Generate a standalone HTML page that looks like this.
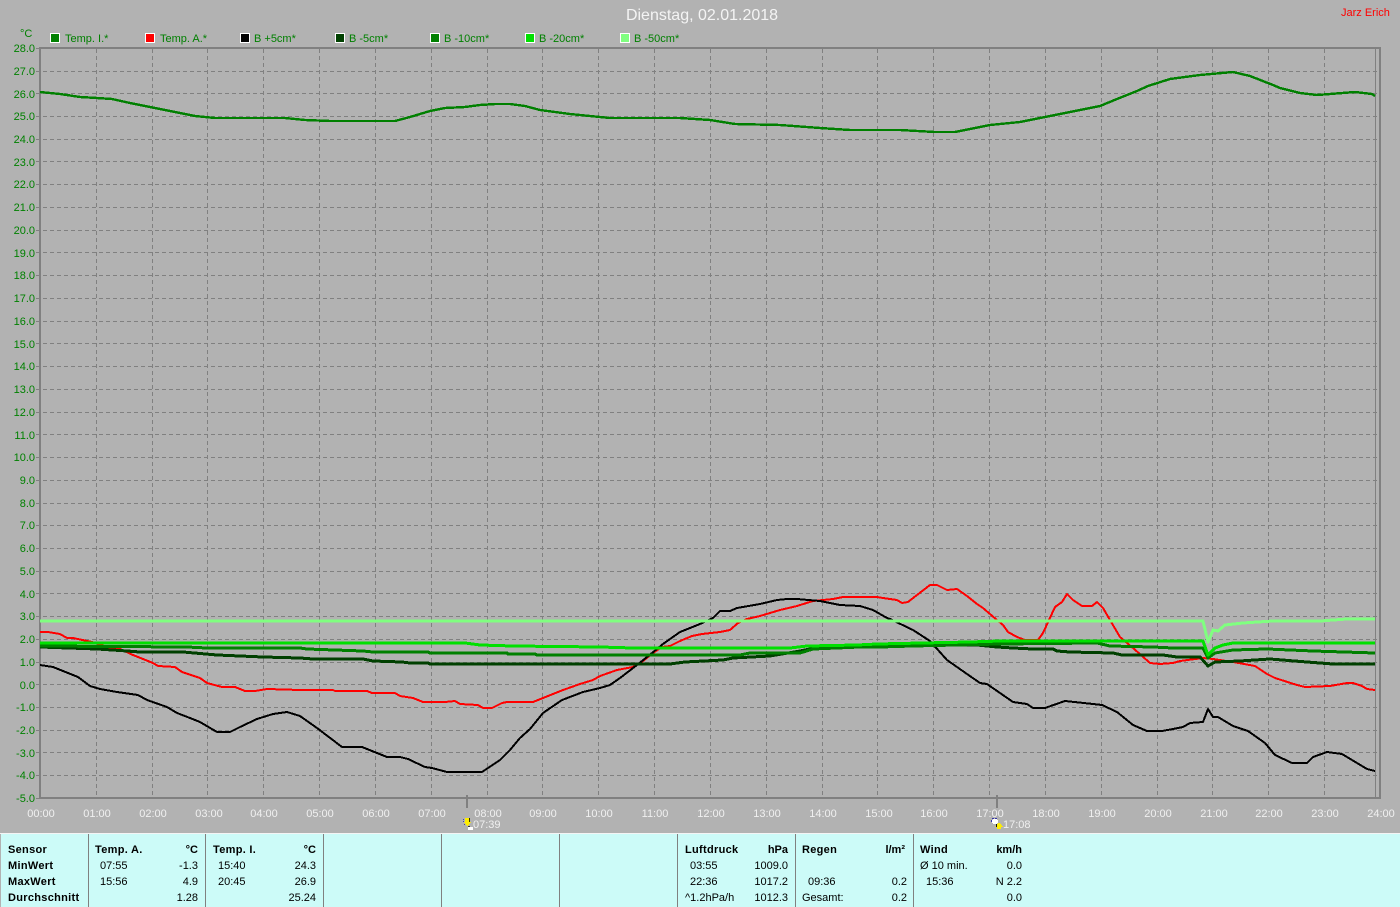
<!DOCTYPE html>
<html><head><meta charset="utf-8"><title>Dienstag, 02.01.2018</title>
<style>
html,body{margin:0;padding:0;width:1400px;height:907px;overflow:hidden;background:#b2b2b2}
svg{display:block}
text{font-family:"Liberation Sans",sans-serif;font-size:11px}
.y{fill:#008000;text-anchor:end}
.l{fill:#008000}
.x{fill:#f0f0f0;text-anchor:middle}
.b{font-weight:bold;letter-spacing:.3px;fill:#000}
.t{fill:#000}
.r{fill:#000;text-anchor:end}
.rb{fill:#000;text-anchor:end;font-weight:bold}
polyline{fill:none;stroke-linejoin:round;shape-rendering:crispEdges}
</style></head><body>
<svg width="1400" height="907" viewBox="0 0 1400 907" xmlns="http://www.w3.org/2000/svg">
<rect width="1400" height="907" fill="#b2b2b2"/>
<text x="702" y="20" text-anchor="middle" style="font-size:16px" fill="#f4f4f4">Dienstag, 02.01.2018</text>
<text x="1341" y="16" fill="#ff0000">Jarz Erich</text>
<text x="20" y="37" class="l">°C</text>

<g shape-rendering="crispEdges" stroke="#fff" stroke-width="1">
<rect x="50.5" y="33.5" width="9" height="9" fill="#008000"/>
<rect x="145.5" y="33.5" width="9" height="9" fill="#ff0000"/>
<rect x="240.5" y="33.5" width="9" height="9" fill="#000"/>
<rect x="335.5" y="33.5" width="9" height="9" fill="#004000"/>
<rect x="430.5" y="33.5" width="9" height="9" fill="#008000"/>
<rect x="525.5" y="33.5" width="9" height="9" fill="#00e000"/>
<rect x="620.5" y="33.5" width="9" height="9" fill="#80ff80"/>
</g>
<text x="65" y="42" class="l">Temp. I.*</text>
<text x="160" y="42" class="l">Temp. A.*</text>
<text x="254" y="42" class="l">B +5cm*</text>
<text x="349" y="42" class="l">B -5cm*</text>
<text x="444" y="42" class="l">B -10cm*</text>
<text x="539" y="42" class="l">B -20cm*</text>
<text x="634" y="42" class="l">B -50cm*</text>

<path shape-rendering="crispEdges" fill="none" stroke="#808080" stroke-width="1" stroke-dasharray="4 3" d="M96.5 49V798M152.5 49V798M207.5 49V798M263.5 49V798M319.5 49V798M375.5 49V798M431.5 49V798M487.5 49V798M542.5 49V798M598.5 49V798M654.5 49V798M710.5 49V798M766.5 49V798M822.5 49V798M877.5 49V798M933.5 49V798M989.5 49V798M1045.5 49V798M1101.5 49V798M1157.5 49V798M1212.5 49V798M1268.5 49V798M1324.5 49V798
M36 71.5H1380M36 93.5H1380M36 116.5H1380M36 139.5H1380M36 161.5H1380M36 184.5H1380M36 207.5H1380M36 230.5H1380M36 252.5H1380M36 275.5H1380M36 298.5H1380M36 321.5H1380M36 343.5H1380M36 366.5H1380M36 389.5H1380M36 412.5H1380M36 434.5H1380M36 457.5H1380M36 480.5H1380M36 503.5H1380M36 525.5H1380M36 548.5H1380M36 571.5H1380M36 593.5H1380M36 616.5H1380M36 639.5H1380M36 662.5H1380M36 684.5H1380M36 707.5H1380M36 730.5H1380M36 752.5H1380M36 775.5H1380"/>
<g shape-rendering="crispEdges" fill="#808080">
<rect x="39" y="47" width="2" height="752"/>
<rect x="39" y="47" width="1342" height="2"/>
<rect x="39" y="797" width="1342" height="2"/>
<rect x="1379" y="47" width="2" height="752"/>
<rect x="1375" y="49" width="1" height="748"/>
<rect x="36" y="48" width="3" height="1"/>
<rect x="36" y="798" width="3" height="1"/>
<rect x="466" y="795" width="2" height="13"/>
<rect x="996" y="795" width="2" height="13"/>
</g>

<g class="ylabels">
<text x="35" y="52" class="y">28.0</text><text x="35" y="75" class="y">27.0</text><text x="35" y="98" class="y">26.0</text><text x="35" y="120" class="y">25.0</text><text x="35" y="143" class="y">24.0</text><text x="35" y="166" class="y">23.0</text><text x="35" y="188" class="y">22.0</text><text x="35" y="211" class="y">21.0</text><text x="35" y="234" class="y">20.0</text><text x="35" y="257" class="y">19.0</text><text x="35" y="279" class="y">18.0</text><text x="35" y="302" class="y">17.0</text><text x="35" y="325" class="y">16.0</text><text x="35" y="348" class="y">15.0</text><text x="35" y="370" class="y">14.0</text><text x="35" y="393" class="y">13.0</text><text x="35" y="416" class="y">12.0</text><text x="35" y="439" class="y">11.0</text><text x="35" y="461" class="y">10.0</text><text x="35" y="484" class="y">9.0</text><text x="35" y="507" class="y">8.0</text><text x="35" y="529" class="y">7.0</text><text x="35" y="552" class="y">6.0</text><text x="35" y="575" class="y">5.0</text><text x="35" y="598" class="y">4.0</text><text x="35" y="620" class="y">3.0</text><text x="35" y="643" class="y">2.0</text><text x="35" y="666" class="y">1.0</text><text x="35" y="689" class="y">0.0</text><text x="35" y="711" class="y">-1.0</text><text x="35" y="734" class="y">-2.0</text><text x="35" y="757" class="y">-3.0</text><text x="35" y="779" class="y">-4.0</text><text x="35" y="802" class="y">-5.0</text>
</g>

<!-- Temp I -->
<polyline stroke="#008000" stroke-width="2.4" points="40,92 60,94 80,97 97,98 112,99 130,103 150,107 175,112 195,116 215,118 250,118 285,118 305,120 330,121 395,121 410,117 430,111 445,108 465,107 480,105 495,104 510,104 525,106 540,110 570,114 610,118 680,118 710,120 735,124 780,125 820,128 850,130 900,130 935,132 955,132 970,129 990,125 1020,122 1045,117 1070,112 1100,106 1117,99 1137,91 1148,86 1170,79 1200,75 1233,72 1250,76 1273,85 1280,88 1300,93 1317,95 1330,94 1355,92 1372,94 1375,96"/>
<!-- Temp A -->
<polyline stroke="#ff0000" stroke-width="2" points="40,632 48,632 60,634 67,638 73,638 92,642 110,648 120,649 133,655 153,663 158,666 175,667 182,672 200,678 207,683 222,687 235,687 245,691 255,691 267,689 300,690 333,690 335,691 367,691 372,693 395,693 400,696 413,698 423,702 445,702 455,701 460,704 478,705 483,708 492,708 502,703 507,702 533,702 548,696 563,690 580,684 593,680 600,676 617,670 633,667 643,661 653,653 662,647 670,646 680,641 692,636 702,634 720,632 730,630 738,623 747,619 760,616 770,613 780,610 797,606 813,601 833,599 843,597 877,597 883,598 897,600 902,603 908,602 917,595 930,585 937,585 947,590 957,589 967,596 977,604 983,608 997,620 1003,625 1008,632 1017,637 1025,640 1038,640 1043,633 1055,607 1062,602 1067,594 1073,600 1082,606 1092,606 1097,602 1103,608 1110,620 1120,637 1133,648 1150,663 1160,664 1173,663 1180,661 1203,658 1213,659 1233,662 1255,666 1267,674 1275,678 1297,685 1305,687 1330,686 1347,683 1353,683 1362,686 1367,689 1375,690"/>
<!-- B +5 -->
<polyline stroke="#000" stroke-width="2" points="40,665 53,667 63,671 78,677 90,686 100,689 117,692 138,695 147,700 167,707 177,713 190,718 200,722 217,732 230,732 240,727 257,719 273,714 287,712 300,716 317,728 342,747 362,747 377,753 387,757 400,757 408,759 425,767 432,768 447,772 482,772 500,760 510,750 520,738 530,729 543,713 562,700 583,692 600,688 610,685 620,678 637,665 652,653 663,644 680,632 700,624 713,618 720,611 730,611 737,608 760,604 777,600 787,599 797,599 820,601 840,605 860,606 873,610 887,618 890,619 913,630 930,641 947,660 967,674 980,683 987,684 1013,702 1027,704 1033,708 1045,708 1065,701 1093,704 1102,705 1117,712 1133,725 1147,731 1162,731 1173,729 1183,727 1190,723 1203,722 1208,709 1213,717 1218,717 1233,726 1248,731 1265,743 1270,749 1275,755 1292,763 1307,763 1313,757 1327,752 1342,754 1367,769 1375,771"/>
<!-- B -5 -->
<polyline stroke="#004000" stroke-width="3" points="40,647 97,649 127,651 140,652 183,652 217,655 263,657 300,658 313,659 363,659 373,661 402,662 410,663 428,663 430,664 670,664 685,662 723,660 733,658 770,656 800,651 810,649 827,648 880,646 913,645 977,645 997,647 1013,648 1033,649 1053,649 1057,651 1070,652 1113,653 1122,655 1163,655 1177,657 1200,657 1208,666 1215,662 1240,661 1270,659 1307,662 1333,664 1375,664"/>
<!-- B -10 -->
<polyline stroke="#008000" stroke-width="3" points="40,646 187,647 207,648 300,648 307,649 363,651 373,652 428,652 430,653 507,653 508,654 535,654 537,655 740,655 750,653 800,653 813,649 860,647 880,647 913,646 1000,644 1097,643 1110,646 1153,647 1173,648 1203,648 1208,658 1215,653 1233,650 1267,649 1313,651 1375,653"/>
<!-- B -20 -->
<polyline stroke="#00e000" stroke-width="3" points="40,643 465,643 480,645 513,646 600,647 633,648 790,648 807,646 857,645 877,644 922,643 970,642 1000,641 1203,641 1208,655 1215,648 1223,645 1233,643 1375,643"/>
<!-- B -50 -->
<polyline stroke="#80ff80" stroke-width="3" points="40,621 1203,621 1208,642 1213,630 1218,631 1225,625 1243,623 1273,621 1320,621 1347,619 1375,619"/>

<g>
<text x="41" y="817" class="x">00:00</text><text x="97" y="817" class="x">01:00</text><text x="153" y="817" class="x">02:00</text><text x="209" y="817" class="x">03:00</text><text x="264" y="817" class="x">04:00</text><text x="320" y="817" class="x">05:00</text><text x="376" y="817" class="x">06:00</text><text x="432" y="817" class="x">07:00</text><text x="488" y="817" class="x">08:00</text><text x="543" y="817" class="x">09:00</text><text x="599" y="817" class="x">10:00</text><text x="655" y="817" class="x">11:00</text><text x="711" y="817" class="x">12:00</text><text x="767" y="817" class="x">13:00</text><text x="823" y="817" class="x">14:00</text><text x="879" y="817" class="x">15:00</text><text x="934" y="817" class="x">16:00</text><text x="990" y="817" class="x">17:00</text><text x="1046" y="817" class="x">18:00</text><text x="1102" y="817" class="x">19:00</text><text x="1158" y="817" class="x">20:00</text><text x="1214" y="817" class="x">21:00</text><text x="1269" y="817" class="x">22:00</text><text x="1325" y="817" class="x">23:00</text><text x="1381" y="817" class="x">24:00</text>
</g>
<!-- sun markers -->
<g shape-rendering="crispEdges">
<rect x="463" y="819" width="1" height="1" fill="#4444aa"/><rect x="463" y="821" width="1" height="1" fill="#4444aa"/><rect x="464" y="824" width="1" height="1" fill="#4444aa"/>
<polygon points="465,818 469,818 469,822 471,822 468,826 467,826 464,822 465,822" fill="#ffee00"/>
<rect x="469" y="818" width="1" height="4" fill="#333300"/>
<rect x="468" y="826" width="2" height="1" fill="#333333"/>
<rect x="468" y="827" width="5" height="3" fill="#ffffff"/>
</g>
<text x="473" y="828" fill="#f0f0f0">07:39</text>
<g shape-rendering="crispEdges">
<rect x="993" y="819" width="4" height="5" fill="#ffffff"/>
<rect x="992" y="820" width="6" height="3" fill="#ffffff"/>
<rect x="992" y="818" width="2" height="1" fill="#3333aa"/><rect x="991" y="820" width="1" height="2" fill="#3333aa"/><rect x="995" y="818" width="2" height="1" fill="#3333aa"/>
<polygon points="998,823 1000,823 1003,827 1001,827 1001,829 997,829 997,827 995,827" fill="#ffee00"/>
<rect x="996" y="824" width="1" height="3" fill="#111111"/>
</g>
<text x="1003" y="828" fill="#f0f0f0">17:08</text>

<!-- panel -->
<g shape-rendering="crispEdges">
<rect x="0" y="833" width="1400" height="1" fill="#f4f4f4"/>
<rect x="1" y="834" width="1399" height="73" fill="#ccfbf8"/>
<g fill="#808080">
<rect x="88" y="834" width="1" height="73"/><rect x="205" y="834" width="1" height="73"/><rect x="323" y="834" width="1" height="73"/><rect x="441" y="834" width="1" height="73"/><rect x="559" y="834" width="1" height="73"/><rect x="677" y="834" width="1" height="73"/><rect x="795" y="834" width="1" height="73"/><rect x="913" y="834" width="1" height="73"/>
</g>
</g>
<text x="8" y="853" class="b">Sensor</text>
<text x="8" y="869" class="b">MinWert</text>
<text x="8" y="885" class="b">MaxWert</text>
<text x="8" y="901" class="b">Durchschnitt</text>

<text x="95" y="853" class="b">Temp. A.</text><text x="198" y="853" class="rb">°C</text>
<text x="100" y="869" class="t">07:55</text><text x="198" y="869" class="r">-1.3</text>
<text x="100" y="885" class="t">15:56</text><text x="198" y="885" class="r">4.9</text>
<text x="198" y="901" class="r">1.28</text>

<text x="213" y="853" class="b">Temp. I.</text><text x="316" y="853" class="rb">°C</text>
<text x="218" y="869" class="t">15:40</text><text x="316" y="869" class="r">24.3</text>
<text x="218" y="885" class="t">20:45</text><text x="316" y="885" class="r">26.9</text>
<text x="316" y="901" class="r">25.24</text>

<text x="685" y="853" class="b">Luftdruck</text><text x="788" y="853" class="rb">hPa</text>
<text x="690" y="869" class="t">03:55</text><text x="788" y="869" class="r">1009.0</text>
<text x="690" y="885" class="t">22:36</text><text x="788" y="885" class="r">1017.2</text>
<text x="685" y="901" class="t">^1.2hPa/h</text><text x="788" y="901" class="r">1012.3</text>

<text x="802" y="853" class="b">Regen</text><text x="905" y="853" class="rb">l/m²</text>
<text x="808" y="885" class="t">09:36</text><text x="907" y="885" class="r">0.2</text>
<text x="802" y="901" class="t">Gesamt:</text><text x="907" y="901" class="r">0.2</text>

<text x="920" y="853" class="b">Wind</text><text x="1022" y="853" class="rb">km/h</text>
<text x="920" y="869" class="t">Ø 10 min.</text><text x="1022" y="869" class="r">0.0</text>
<text x="926" y="885" class="t">15:36</text><text x="1022" y="885" class="r">N 2.2</text>
<text x="1022" y="901" class="r">0.0</text>
</svg>
</body></html>
